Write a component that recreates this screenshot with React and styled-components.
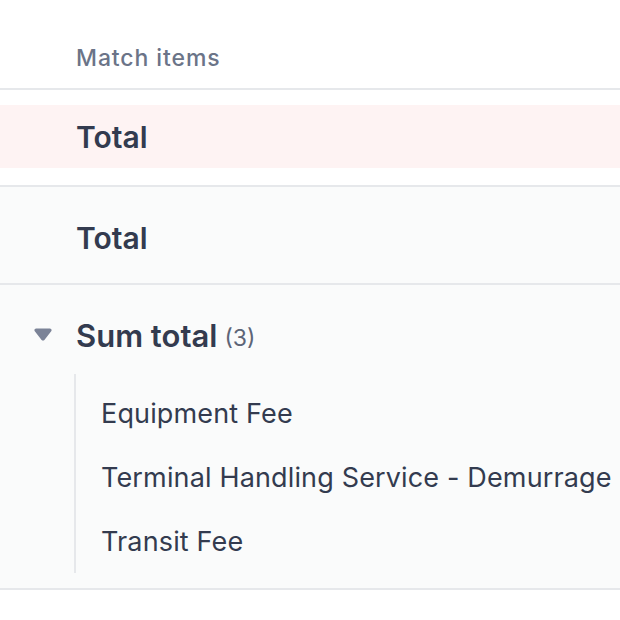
import React from "react"
import styled, { createGlobalStyle } from "styled-components"

const GlobalStyle = createGlobalStyle`
  body {
    margin: 0;
    background: #ffffff;
    font-family: Inter, "Noto Sans", sans-serif;
    color: #333b4f;
  }
`

const items = [
  "Equipment Fee",
  "Terminal Handling Service - Demurrage",
  "Transit Fee",
]

function App() {
  return (
    <>
      <GlobalStyle />
      <Table>
        <Header>Match items</Header>
        <Section>
          <Row $tone="error">
            <Label>Total</Label>
          </Row>
        </Section>
        <Section $tone="muted">
          <Row $height={96} $offset={6}>
            <Label>Total</Label>
          </Row>
        </Section>
        <Section $tone="muted">
          <GroupHead>
            <Caret viewBox="0 0 18 13">
              <path d="M2.2 0.5h13.6c1.5 0 2.3 1.7 1.4 2.8l-6.8 8.6c-0.7 0.9-2 0.9-2.8 0L0.8 3.3C-0.1 2.2 0.7 0.5 2.2 0.5z" />
            </Caret>
            <Label $size={31}>Sum total</Label>
            <Count>(3)</Count>
          </GroupHead>
          <ChildList>
            {items.map(item => (
              <ChildItem key={item}>{item}</ChildItem>
            ))}
          </ChildList>
        </Section>
      </Table>
    </>
  )
}

export default App

const Table = styled.div`
  width: 620px;
  height: 620px;
  overflow: hidden;
  background: #ffffff;
`

const Header = styled.div`
  height: 90px;
  box-sizing: border-box;
  display: flex;
  align-items: center;
  padding: 28px 0 0 76px;
  font-size: 23px;
  font-weight: 500;
  letter-spacing: 0.9px;
  color: #6b7488;
  border-bottom: 2px solid #e6e8eb;
`

const Section = styled.div`
  background: ${props => (props.$tone === "muted" ? "#fafbfb" : "#ffffff")};
  padding: ${props => (props.$tone === "muted" ? "0" : "15px 0 17px")};
  border-bottom: 2px solid #e6e8eb;
`

const Row = styled.div`
  height: ${props => props.$height || 63}px;
  box-sizing: border-box;
  padding-top: ${props => props.$offset || 0}px;
  display: flex;
  align-items: center;
  padding-left: 76px;
  background: ${props => (props.$tone === "error" ? "#fef3f3" : "transparent")};
`

const Label = styled.span`
  font-size: ${props => props.$size || 30}px;
  font-weight: 600;
  color: #333b4f;
`

const GroupHead = styled.div`
  height: 89px;
  box-sizing: border-box;
  padding: 11px 0 0 34px;
  display: flex;
  align-items: center;
`

const Caret = styled.svg`
  width: 18px;
  height: 13px;
  fill: #7b8397;
  margin-right: 24px;
  margin-top: -1px;
`

const Count = styled.span`
  font-size: 23px;
  color: #5d6577;
  margin-left: 7px;
  margin-top: 5px;
`

const ChildList = styled.div`
  margin: 0 0 15px 74px;
  border-left: 2px solid #e6e8eb;
  padding: 7px 0 0 25px;
  display: flex;
  flex-direction: column;
`

const ChildItem = styled.div`
  height: 64px;
  display: flex;
  align-items: center;
  font-size: 27px;
  letter-spacing: 0.15px;
  color: #333b4f;
  white-space: nowrap;
`
